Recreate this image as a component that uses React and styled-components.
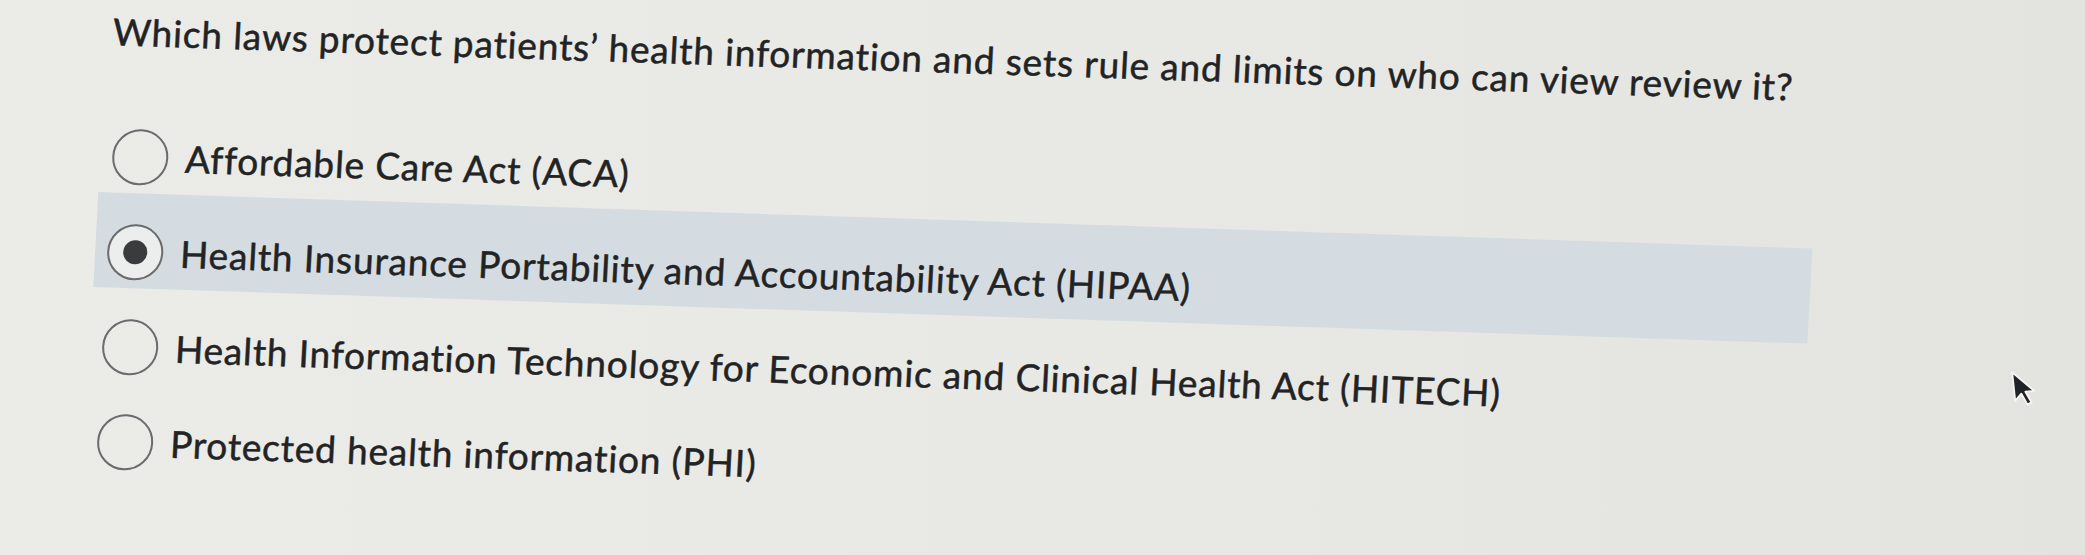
import styled, { createGlobalStyle } from "styled-components";

const answers = [
  { id: "aca", label: "Affordable Care Act (ACA)" },
  {
    id: "hipaa",
    label: "Health Insurance Portability and Accountability Act (HIPAA)",
    selected: true,
  },
  {
    id: "hitech",
    label:
      "Health Information Technology for Economic and Clinical Health Act (HITECH)",
  },
  { id: "phi", label: "Protected health information (PHI)" },
];

const App = () => {
  return (
    <Page>
      <GlobalStyle />
      <Quiz>
        <Question>
          Which laws protect patients’ health information and sets rule and
          limits on who can view review it?
        </Question>
        <AnswerList>
          {answers.map((a) => (
            <Answer key={a.id} $active={a.selected}>
              <Radio $checked={a.selected} />
              <Label>{a.label}</Label>
            </Answer>
          ))}
        </AnswerList>
      </Quiz>
      <Pointer viewBox="0 0 12 20" aria-hidden="true">
        <path
          d="M1 1 L1 16 L4.6 12.6 L7.2 18.6 L9.4 17.6 L6.8 11.8 L11.4 11.8 Z"
          fill="#1f2226"
          stroke="#f4f4f2"
          strokeWidth="1"
          strokeLinejoin="round"
        />
      </Pointer>
    </Page>
  );
};

// Styled components
const GlobalStyle = createGlobalStyle`
  html, body {
    margin: 0;
    padding: 0;
    background: #e7e7e3;
  }
  body {
    font-family: Lato, "Open Sans", sans-serif;
  }
`;

const Page = styled.div`
  position: relative;
  width: 2085px;
  height: 555px;
  overflow: hidden;
  box-sizing: border-box;
  padding: 10px 0 0 108px;
  background: linear-gradient(90deg, #ebebe8 0%, #e8e8e4 55%, #e3e3df 100%);
`;

const Quiz = styled.div`
  width: 1714px;
  transform-origin: 0 0;
  transform: matrix(1, 0.033, -0.053, 1, 0, 0);
  color: #222324;
`;

const Text = styled.span`
  font-size: 37px;
  line-height: 42px;
  letter-spacing: 0.85px;
  white-space: nowrap;
  -webkit-text-stroke: 0.5px #222324;
`;

const Question = styled(Text).attrs({ as: "div" })`
  padding-left: 6px;
  margin-bottom: 45px;
`;

const AnswerList = styled.div`
  display: flex;
  flex-direction: column;
`;

const Answer = styled.label`
  display: flex;
  align-items: center;
  gap: 17px;
  height: 95px;
  box-sizing: border-box;
  padding: 23px 0 0 12px;
  background: ${({ $active }) => ($active ? "#d4dce1" : "transparent")};
  cursor: pointer;
`;

const Radio = styled.span`
  flex: none;
  position: relative;
  width: 56px;
  height: 56px;
  box-sizing: border-box;
  border-radius: 50%;
  border: 2.5px solid #6a6b6c;
  background: ${({ $checked }) => ($checked ? "#eceeee" : "transparent")};

  &::after {
    content: "";
    display: ${({ $checked }) => ($checked ? "block" : "none")};
    position: absolute;
    left: 50%;
    top: 50%;
    width: 24px;
    height: 24px;
    margin: -12px 0 0 -12px;
    border-radius: 50%;
    background: #3a3b3d;
  }
`;

const Label = styled(Text)``;

const Pointer = styled.svg`
  position: absolute;
  left: 2012px;
  top: 369px;
  width: 23px;
  height: 39px;
  transform: rotate(-6deg);
`;

export default App;
